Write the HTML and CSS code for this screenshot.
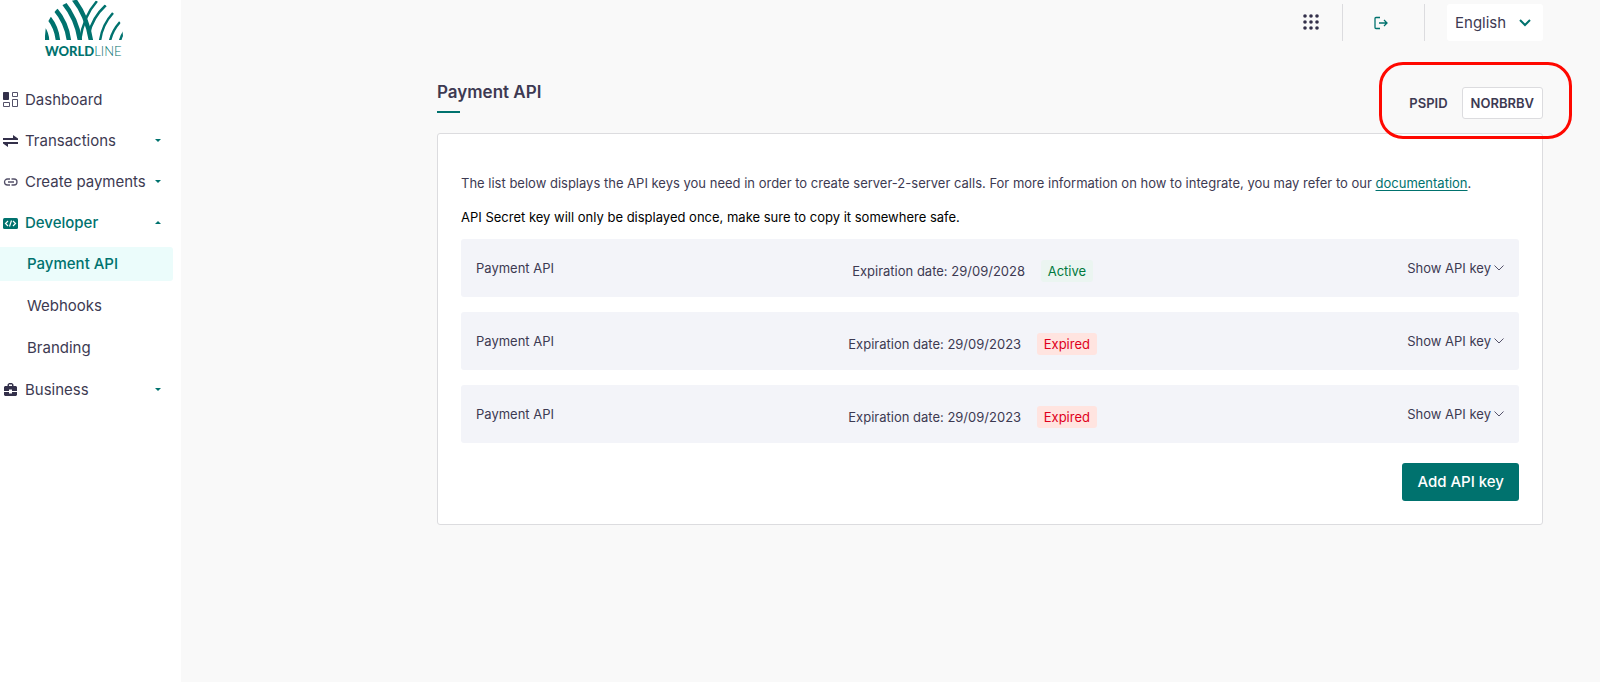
FILE: index.html
```html
<!DOCTYPE html>
<html lang="en">
<head>
    <meta charset="UTF-8">
    <meta name="viewport" content="width=device-width, initial-scale=1.0">
    <title>Payment API</title>
    <link rel="stylesheet" href="styles.css">
</head>
<body>
    <aside class="sidebar">
        <a href="#" class="logo">
            <svg width="80" height="40" viewBox="0 0 80 40" fill="none" stroke="#00726e">
                <clipPath id="dome"><path d="M1 40V36A39 37 0 0 1 79 36V40Z"/></clipPath>
                <g clip-path="url(#dome)">
                    <path stroke-width="4.500" d="M-1 28Q3 34 3 41M5 18Q13 28 14 41M11 9Q23 23 25 41M19 2Q33 19 36 41M28 -3Q43 15 47 41"/>
                    <path stroke-width="2.500" d="M36 41Q39 17 53 1M45 34Q48 18 62 5M56 41Q58 25 69 13M66 41Q68 31 76 22M76 41Q77 36 80 32"/>
                </g>
            </svg>
            <span class="logo-text"><b>WORLD</b>LINE</span>
        </a>

        <nav>
            <ul class="menu">
                <li>
                    <a href="#" class="menu-item">
                        <svg class="icon" viewBox="0 0 16 16" fill="none" stroke="#55526a"><path fill="#33304a" stroke="#33304a" d="M.5.5h5v7h-5z"/><path d="M9.500.5h5v4h-5zM.5 10.500h6v4h-6zM9.500 7.500h5v7h-5z"/></svg>
                        <span>Dashboard</span>
                    </a>
                </li>
                <li>
                    <a href="#" class="menu-item">
                        <svg class="icon" viewBox="0 0 16 16" fill="#33304a"><path d="M0 5h10V2l5 3.500V7H0zM15 9H0v1.500L5 14v-3h10z"/></svg>
                        <span>Transactions</span>
                        <i class="caret"></i>
                    </a>
                </li>
                <li>
                    <a href="#" class="menu-item">
                        <svg class="icon" viewBox="0 0 16 16" fill="none" stroke="#55526a" stroke-width="1.300"><path d="M7 5H4.500a3 3 0 0 0 0 6H7M8.500 5H11a3 3 0 0 1 0 6H8.500M5 8h6"/></svg>
                        <span>Create payments</span>
                        <i class="caret"></i>
                    </a>
                </li>
                <li>
                    <a href="#" class="menu-item open">
                        <svg class="icon" viewBox="0 0 16 16"><rect y="3" width="15" height="11" rx="1.500" fill="#00726e"/><path fill="none" stroke="#fff" stroke-width="1.200" d="M5 6L2.500 8.500 5 11M10 6l2.500 2.500L10 11M8.500 5.500l-2 6"/></svg>
                        <span>Developer</span>
                        <i class="caret up"></i>
                    </a>
                    <ul class="submenu">
                        <li><a href="#" class="active">Payment API</a></li>
                        <li><a href="#">Webhooks</a></li>
                        <li><a href="#">Branding</a></li>
                    </ul>
                </li>
                <li>
                    <a href="#" class="menu-item">
                        <svg class="icon" viewBox="0 0 16 16" fill="#33304a"><path fill-rule="evenodd" d="M4.500 4V2.500L6 1h3l1.500 1.500V4H13l1 1v4H9V7.500H6V9H1V5l1-1zM6 4h3V2.500H6zM1 10h5v1.500h3V10h5v3l-1 1H2l-1-1z"/></svg>
                        <span>Business</span>
                        <i class="caret"></i>
                    </a>
                </li>
            </ul>
        </nav>
    </aside>

    <div class="page">
        <header class="topbar">
            <button type="button" class="icon-btn apps" aria-label="Applications">
                <svg width="16" height="16" viewBox="0 0 16 16" fill="#33304a"><circle cx="2" cy="2" r="1.800"/><circle cx="8" cy="2" r="1.800"/><circle cx="14" cy="2" r="1.800"/><circle cx="2" cy="8" r="1.800"/><circle cx="8" cy="8" r="1.800"/><circle cx="14" cy="8" r="1.800"/><circle cx="2" cy="14" r="1.800"/><circle cx="8" cy="14" r="1.800"/><circle cx="14" cy="14" r="1.800"/></svg>
            </button>
            <button type="button" class="icon-btn logout" aria-label="Log out">
                <svg width="14" height="14" viewBox="0 0 14 14" fill="none" stroke="#00726e" stroke-width="1.300"><path d="M6 1.500H2q-1 0-1 1v9q0 1 1 1h4M5 7h8M10 4l3 3-3 3"/></svg>
            </button>
            <div class="language">
                <select aria-label="Language">
                    <option>English</option>
                </select>
                <svg width="12" height="8" viewBox="0 0 12 8" fill="none" stroke="#00726e" stroke-width="2"><path d="M1 1l5 5 5-5"/></svg>
            </div>
        </header>

        <main>
            <div class="page-head">
                <h1>Payment API</h1>
                <div class="pspid">
                    <span>PSPID</span>
                    <span class="pspid-value">NORBRBV</span>
                </div>
            </div>

            <section class="card">
                <p>The list below displays the API keys you need in order to create server-2-server calls. For more information on how to integrate, you may refer to our <a href="#">documentation</a>.</p>
                <p class="notice">API Secret key will only be displayed once, make sure to copy it somewhere safe.</p>

                <div class="key-row">
                    <span>Payment API</span>
                    <div class="expiry">Expiration date: 29/09/2028 <span class="badge green">Active</span></div>
                    <button type="button" class="show-key">Show API key <svg width="10" height="6" viewBox="0 0 10 6" fill="none" stroke="#55526a"><path d="M.5.5L5 5 9.500.5"/></svg></button>
                </div>
                <div class="key-row">
                    <span>Payment API</span>
                    <div class="expiry">Expiration date: 29/09/2023 <span class="badge red">Expired</span></div>
                    <button type="button" class="show-key">Show API key <svg width="10" height="6" viewBox="0 0 10 6" fill="none" stroke="#55526a"><path d="M.5.5L5 5 9.500.5"/></svg></button>
                </div>
                <div class="key-row">
                    <span>Payment API</span>
                    <div class="expiry">Expiration date: 29/09/2023 <span class="badge red">Expired</span></div>
                    <button type="button" class="show-key">Show API key <svg width="10" height="6" viewBox="0 0 10 6" fill="none" stroke="#55526a"><path d="M.5.5L5 5 9.500.5"/></svg></button>
                </div>

                <button type="button" class="add-key">Add API key</button>
            </section>
        </main>
    </div>
</body>
</html>
```
FILE: styles.css
```css
* {
    box-sizing: border-box;
}

body {
    margin: 0;
    min-height: 100vh;
    display: flex;
    background: #f9f9f9;
    color: #3d3a52;
    font-family: Inter, Arial, sans-serif;
    font-size: 13px;
    line-height: 20px;
}

button, select {
    font: inherit;
    color: inherit;
    border: none;
    background: none;
    padding: 0;
    cursor: pointer;
}

ul {
    list-style: none;
    margin: 0;
    padding: 0;
}

/* Sidebar */
.sidebar {
    width: 181px;
    flex-shrink: 0;
    background: #fff;
}

.logo {
    display: block;
    width: 80px;
    margin-left: 44px;
    color: #00726e;
    text-decoration: none;
}

.logo svg {
    display: block;
}

.logo-text {
    display: block;
    padding-left: 1px;
    font-family: Lato, sans-serif;
    font-size: 13px;
    font-weight: 300;
    line-height: 22px;
}

.logo-text b {
    font-weight: 900;
}

.menu {
    display: flex;
    flex-direction: column;
    gap: 8px;
    margin-top: 21px;
    font-size: 15px;
}

.menu-item {
    display: flex;
    align-items: center;
    height: 33px;
    padding: 0 20px 0 3px;
    color: #3d3a52;
    text-decoration: none;
}

.icon {
    width: 16px;
    height: 16px;
    margin-right: 6px;
}

.caret {
    margin-left: auto;
    border: 3px solid transparent;
    border-top-color: #00726e;
    border-bottom-width: 0;
}

.caret.up {
    border-top-width: 0;
    border-bottom: 3px solid #00726e;
}

.menu-item.open {
    color: #00726e;
    font-weight: 500;
}

.submenu {
    display: flex;
    flex-direction: column;
    gap: 8px;
    margin: 8px 8px 0 0;
}

.submenu a {
    display: block;
    padding-left: 27px;
    line-height: 34px;
    color: #3d3a52;
    text-decoration: none;
    border-radius: 0 3px 3px 0;
}

.submenu .active {
    background: #ebfcfb;
    color: #00726e;
    font-weight: 500;
}

/* Top bar */
.page {
    flex: 1;
    padding: 4px 57px 0 256px;
}

.topbar {
    display: flex;
    justify-content: flex-end;
    height: 37px;
}

.icon-btn {
    display: flex;
    align-items: center;
    justify-content: center;
    border-right: 1px solid #dcdcdf;
}

.apps {
    width: 63px;
    padding-bottom: 2px;
}

.logout {
    width: 82px;
    padding-right: 6px;
}

.language {
    position: relative;
    width: 96px;
    margin-left: 22px;
    background: #fff;
    border-radius: 3px;
    font-size: 15px;
}

.language select {
    appearance: none;
    width: 100%;
    height: 100%;
    padding-left: 8px;
}

.language svg {
    position: absolute;
    top: 15px;
    right: 12px;
    pointer-events: none;
}

/* Payment API page */
.page-head {
    display: flex;
    justify-content: space-between;
    height: 92px;
    padding-top: 39px;
}

h1 {
    margin: 0;
    font-size: 17px;
    font-weight: 600;
    line-height: 24px;
}

h1::after {
    content: "";
    display: block;
    width: 23px;
    height: 2px;
    margin-top: 7px;
    background: #00726e;
}

.pspid {
    position: relative;
    display: flex;
    align-items: center;
    gap: 14px;
    height: 32px;
    margin-top: 7px;
    font-weight: 600;
}

/* red highlight around the PSPID */
.pspid::after {
    content: "";
    position: absolute;
    inset: -25px -29px -20px -30px;
    border: 3px solid #ff0800;
    border-radius: 24px;
    pointer-events: none;
}

.pspid-value {
    padding: 6px 8px;
    line-height: 18px;
    background: #fff;
    border: 1px solid #dcdcdf;
    border-radius: 3px;
}

.card {
    padding: 39px 23px 23px;
    background: #fff;
    border: 1px solid #dcdcdf;
    border-radius: 3px;
}

.card p {
    margin: 0 0 14px;
}

.card p a {
    color: #00726e;
    text-underline-offset: 2px;
}

.card .notice {
    margin-bottom: 12px;
    color: #000;
}

.key-row {
    display: flex;
    justify-content: space-between;
    align-items: flex-start;
    height: 58px;
    margin-bottom: 15px;
    padding: 19px 15px;
    background: #f3f4f9;
    border-radius: 3px;
}

.expiry {
    padding-top: 2px;
}

.badge {
    display: inline-block;
    margin: 0 16px 0 12px;
    padding: 1px 7px;
    border-radius: 3px;
}

.badge.green {
    background: #ebf5f1;
    color: #007a3d;
}

.badge.red {
    background: #ffe4e0;
    color: #e0001b;
}

.show-key {
    display: flex;
    align-items: center;
    gap: 3px;
}

.add-key {
    display: block;
    margin: 20px 0 0 auto;
    padding: 0 15px;
    background: #00726e;
    color: #fff;
    font-size: 15px;
    font-weight: 500;
    line-height: 38px;
    border-radius: 3px;
}
```
